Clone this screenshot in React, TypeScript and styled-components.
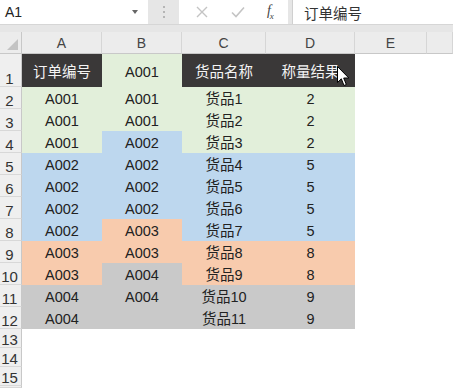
import React from 'react'
import styled, { createGlobalStyle } from 'styled-components'

type Tone = 'dark' | 'green' | 'blue' | 'orange' | 'gray' | 'none'

const toneColors: Record<Tone, string> = {
  dark: '#3a3838',
  green: '#e2efda',
  blue: '#bdd7ee',
  orange: '#f8cbad',
  gray: '#c9c9c9',
  none: '#ffffff'
}

const GlobalStyle = createGlobalStyle`
  html, body {
    margin: 0;
    padding: 0;
    background: #ffffff;
  }
  body {
    font-family: "Liberation Sans", "Noto Sans CJK SC", sans-serif;
  }
`

const Window = styled.div`
  position: relative;
  width: 453px;
  height: 388px;
  overflow: hidden;
  background: #e6e6e6;
`

// formula bar
const FormulaBar = styled.div`
  display: flex;
  height: 25px;
  background: #e6e6e6;
  border-bottom: 1px solid #d6d6d6;
  box-sizing: border-box;
`
const NameBox = styled.div`
  width: 148px;
  display: flex;
  align-items: center;
  justify-content: space-between;
  padding: 0 10px 0 5px;
  box-sizing: border-box;
  background: #ffffff;
  font-size: 14px;
  color: #222;
`
const DropArrow = styled.span`
  width: 0;
  height: 0;
  border-left: 3.5px solid transparent;
  border-right: 3.5px solid transparent;
  border-top: 4px solid #666;
`
const Grip = styled.div`
  width: 31px;
  display: flex;
  flex-direction: column;
  align-items: center;
  justify-content: center;
  gap: 3px;
`
const GripDot = styled.span`
  width: 2px;
  height: 2px;
  background: #b5b5b5;
`
const FxBox = styled.div`
  width: 109px;
  display: flex;
  align-items: center;
  justify-content: space-around;
  padding: 0 4px 0 6px;
  box-sizing: border-box;
  background: #ffffff;
`
const FxLabel = styled.span`
  font-family: "Liberation Serif", serif;
  font-style: italic;
  font-size: 14px;
  color: #444;
  letter-spacing: -1px;
  sub {
    font-size: 9px;
  }
`
const FormulaInput = styled.div`
  flex: 1;
  margin-left: 4px;
  display: flex;
  align-items: center;
  padding-left: 11px;
  background: #ffffff;
  border-left: 1px solid #d0d0d0;
  font-size: 14.5px;
  color: #333;
`
const Spacer = styled.div`
  height: 7px;
  background: #e6e6e6;
`

// sheet
const Sheet = styled.div`
  display: grid;
  grid-template-columns: 22px 80px 80px 84px 89px 72px 1fr;
  grid-template-rows: 22px 33px repeat(11, 22px) repeat(3, 19px) 1fr;
  background: #ffffff;
  height: 356px;
`
const Corner = styled.div`
  position: relative;
  background: #ececec;
  border-right: 1px solid #c8c8c8;
  border-bottom: 1px solid #c8c8c8;
  box-sizing: border-box;
  &::after {
    content: '';
    position: absolute;
    right: 3px;
    bottom: 3px;
    width: 0;
    height: 0;
    border-left: 11px solid transparent;
    border-bottom: 11px solid #c3c3c3;
  }
`
const ColHeader = styled.div`
  display: flex;
  align-items: center;
  justify-content: center;
  background: #ececec;
  border-right: 1px solid #d6d6d6;
  border-bottom: 1px solid #c8c8c8;
  box-sizing: border-box;
  font-size: 14px;
  color: #444;
`
const RowHeader = styled.div`
  display: flex;
  align-items: flex-end;
  justify-content: center;
  background: #efefef;
  border-right: 1px solid #c8c8c8;
  border-bottom: 1px solid #d8d8d8;
  box-sizing: border-box;
  font-size: 15px;
  line-height: 14px;
  color: #333;
  padding-right: 2px;
`
const Cell = styled.div<{ $tone: Tone; $title?: boolean }>`
  display: flex;
  align-items: ${(p) => (p.$title ? 'center' : 'flex-end')};
  justify-content: center;
  padding: ${(p) => (p.$title ? '4px 0 0' : '0 0 1px')};
  box-sizing: border-box;
  background: ${(p) => toneColors[p.$tone]};
  color: ${(p) => (p.$tone === 'dark' ? '#f4f4f4' : '#222')};
  font-size: 14.5px;
  line-height: 17px;
  white-space: nowrap;
`
const Pointer = styled.svg`
  position: absolute;
  left: 337px;
  top: 66px;
`

const columns = ['A', 'B', 'C', 'D', 'E', '']

const rows: Array<Array<[string, Tone]>> = [
  [['订单编号', 'dark'], ['A001', 'green'], ['货品名称', 'dark'], ['称量结果', 'dark']],
  [['A001', 'green'], ['A001', 'green'], ['货品1', 'green'], ['2', 'green']],
  [['A001', 'green'], ['A001', 'green'], ['货品2', 'green'], ['2', 'green']],
  [['A001', 'green'], ['A002', 'blue'], ['货品3', 'green'], ['2', 'green']],
  [['A002', 'blue'], ['A002', 'blue'], ['货品4', 'blue'], ['5', 'blue']],
  [['A002', 'blue'], ['A002', 'blue'], ['货品5', 'blue'], ['5', 'blue']],
  [['A002', 'blue'], ['A002', 'blue'], ['货品6', 'blue'], ['5', 'blue']],
  [['A002', 'blue'], ['A003', 'orange'], ['货品7', 'blue'], ['5', 'blue']],
  [['A003', 'orange'], ['A003', 'orange'], ['货品8', 'orange'], ['8', 'orange']],
  [['A003', 'orange'], ['A004', 'gray'], ['货品9', 'orange'], ['8', 'orange']],
  [['A004', 'gray'], ['A004', 'gray'], ['货品10', 'gray'], ['9', 'gray']],
  [['A004', 'gray'], ['', 'gray'], ['货品11', 'gray'], ['9', 'gray']]
]

// empty rows below the data; the last one is cut by the window edge
const emptyRows = ['13', '14', '15', '']

const App: React.FunctionComponent = () => {
  return (
    <Window>
      <GlobalStyle />
      <FormulaBar>
        <NameBox>
          A1
          <DropArrow />
        </NameBox>
        <Grip>
          <GripDot />
          <GripDot />
          <GripDot />
        </Grip>
        <FxBox>
          <svg width='12' height='12' viewBox='0 0 12 12'>
            <path d='M1 1 L11 11 M11 1 L1 11' stroke='#c4c4c4' strokeWidth='1.4' fill='none' />
          </svg>
          <svg width='14' height='12' viewBox='0 0 14 12'>
            <path d='M1 6.5 L5 10.5 L13 1.5' stroke='#c4c4c4' strokeWidth='1.6' fill='none' />
          </svg>
          <FxLabel>f<sub>x</sub></FxLabel>
        </FxBox>
        <FormulaInput>订单编号</FormulaInput>
      </FormulaBar>
      <Spacer />
      <Sheet>
        <Corner />
        {columns.map((c, i) => (
          <ColHeader key={i}>{c}</ColHeader>
        ))}
        {rows.map((row, r) => (
          <React.Fragment key={r}>
            <RowHeader>{r + 1}</RowHeader>
            {row.map(([text, tone], c) => (
              <Cell key={c} $tone={tone} $title={r === 0}>{text}</Cell>
            ))}
            <Cell $tone='none' />
            <Cell $tone='none' />
          </React.Fragment>
        ))}
        {emptyRows.map((n, i) => (
          <React.Fragment key={i}>
            <RowHeader>{n}</RowHeader>
            {columns.map((_, c) => (
              <Cell key={c} $tone='none' />
            ))}
          </React.Fragment>
        ))}
      </Sheet>
      <Pointer width='13' height='21' viewBox='0 0 13 21'>
        <path d='M0.5 0.5 L0.5 16.5 L4.3 12.8 L7 19.5 L9.3 18.5 L6.7 12 L11.8 12 Z' fill='#ffffff' stroke='#000000' strokeWidth='1' />
      </Pointer>
    </Window>
  )
}
App.displayName = 'App'

export default App
